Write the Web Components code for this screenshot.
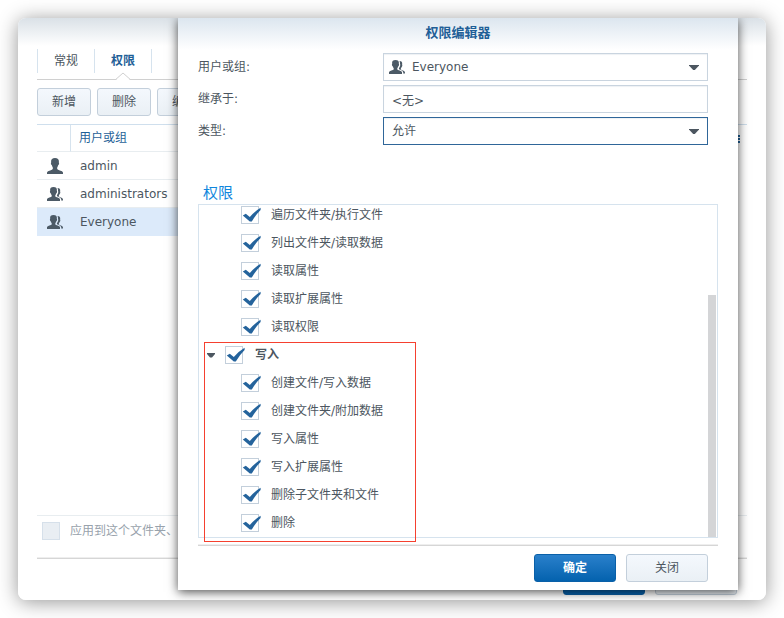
<!DOCTYPE html>
<html lang="zh-CN">
<head>
<meta charset="utf-8">
<title>权限编辑器</title>
<style>
  body {
    margin: 0;
    min-height: 100vh;
    display: flex;
    background: #fff;
    color: #4c5660;
    font: 12px/18px "DejaVu Sans", "Noto Sans CJK SC", sans-serif;
  }
</style>
</head>
<body>
<app-window>
  <tab-bar>
    <tab-item>常规</tab-item>
    <tab-item active>权限</tab-item>
  </tab-bar>
  <tool-bar>
    <ui-button>新增</ui-button>
    <ui-button>删除</ui-button>
    <ui-button>编辑</ui-button>
  </tool-bar>
  <user-table></user-table>
  <apply-bar>应用到这个文件夹、</apply-bar>
  <button-row slot="footer">
    <ui-button wide primary label="确定"></ui-button>
    <ui-button wide label="关闭"></ui-button>
  </button-row>

  <permission-dialog slot="dialog" heading="权限编辑器">
    <form-field slot="form" label="用户或组:" value="Everyone" type="select" icon></form-field>
    <form-field slot="form" label="继承于:" value="&lt;无&gt;" type="text"></form-field>
    <form-field slot="form" label="类型:" value="允许" type="select" focused></form-field>
    <permission-tree heading="权限">
      <check-row>遍历文件夹/执行文件</check-row>
      <check-row>列出文件夹/读取数据</check-row>
      <check-row>读取属性</check-row>
      <check-row>读取扩展属性</check-row>
      <check-row>读取权限</check-row>
      <check-row group>写入</check-row>
      <check-row>创建文件/写入数据</check-row>
      <check-row>创建文件夹/附加数据</check-row>
      <check-row>写入属性</check-row>
      <check-row>写入扩展属性</check-row>
      <check-row>删除子文件夹和文件</check-row>
      <check-row>删除</check-row>
    </permission-tree>
    <button-row slot="footer">
      <ui-button wide primary>确定</ui-button>
      <ui-button wide>关闭</ui-button>
    </button-row>
  </permission-dialog>
</app-window>

<script>
// Small base class: renders the markup of the subclass into its shadow root
class BaseElement extends HTMLElement {
  constructor() {
    super();
    this.attachShadow({ mode: "open" });
  }

  connectedCallback() {
    const template = document.createElement("template");
    template.innerHTML = this.render();
    this.shadowRoot.replaceChildren(template.content.cloneNode(true));
  }
}

class AppWindow extends BaseElement {
  render() {
    return `
<style>
  :host {
    position: relative;
    box-sizing: border-box;
    flex: 1;
    display: flex;
    flex-direction: column;
    margin: 18px;
    padding: 31px 19px 5px;
    border-radius: 8px;
    overflow: hidden;
    background: linear-gradient(#dae1e7, #fff 28px);
    box-shadow: 0 2px 20px rgba(0, 0, 0, 0.42);
  }
</style>
<slot></slot>
<slot name="footer"></slot>
<slot name="dialog"></slot>
`;
  }
}

class TabBar extends BaseElement {
  render() {
    return `
<style>
  :host {
    display: flex;
    padding-bottom: 6px;
    border-bottom: 1px solid #d0d0d0;
  }
</style>
<slot></slot>
`;
  }
}

class TabItem extends BaseElement {
  render() {
    return `
<style>
  :host {
    position: relative;
    display: block;
    border-left: 1px solid #d6e3ee;
  }
  :host(:last-child) {
    border-right: 1px solid #d6e3ee;
  }
  button {
    width: 56px;
    height: 24px;
    padding: 0;
    border: none;
    background: none;
    font: inherit;
    color: inherit;
    cursor: pointer;
  }
  svg {
    display: none;
  }
  :host([active]) button {
    color: #1f5f97;
    font-weight: bold;
  }
  :host([active]) svg {
    display: block;
    position: absolute;
    left: 50%;
    bottom: -7px;
    margin-left: -7px;
  }
</style>
<button><slot></slot></button>
<svg width="14" height="8" viewBox="0 0 14 8"><path d="M0.5 7L7 0.7L13.5 7V8H0.5Z" fill="#fff"/><path d="M0 7.2L7 1L14 7.2" fill="none" stroke="#d0d0d0"/></svg>
`;
  }
}

class ToolBar extends BaseElement {
  render() {
    return `
<style>
  :host {
    display: flex;
    gap: 6px;
    padding: 8px 0;
  }
</style>
<slot></slot>
`;
  }
}

class UiButton extends BaseElement {
  render() {
    const label = this.getAttribute("label");
    return `
<style>
  :host {
    display: block;
  }
  button {
    display: block;
    box-sizing: border-box;
    width: 54px;
    height: 28px;
    padding: 0;
    border: 1px solid #c3cfdb;
    border-radius: 3px;
    background: linear-gradient(#f4f8fd, #eaf0f5);
    font: inherit;
    color: inherit;
    cursor: pointer;
  }
  :host([wide]) button {
    width: 82px;
  }
  :host([primary]) button {
    border-color: #0a60a8;
    background: linear-gradient(#2a80cb, #0462ae);
    color: #fff;
    font-weight: bold;
  }
</style>
<button ${label ? `aria-label="${label}"` : ""}><slot></slot></button>
`;
  }
}

class ButtonRow extends BaseElement {
  render() {
    return `
<style>
  :host {
    display: flex;
    justify-content: flex-end;
    gap: 10px;
    padding: 10px 10px 0;
    background: linear-gradient(#eee 1px, #d6d6d6 1px, #d6d6d6 2px, transparent 2px);
  }
</style>
<slot></slot>
`;
  }
}

class UserIcon extends BaseElement {
  render() {
    const single = `<path d="M8 0C5.4 0 4 1.3 4.100 3.500L4.200 4.500Q3.500 4.800 4.100 6.200Q4.400 7.200 4.900 7.300Q5.200 8.600 5.800 9.400V11Q5.300 11.900 3.200 12.400Q0.300 13 0 14.400V16H16V14.400Q15.700 13 12.800 12.400Q10.700 11.900 10.200 11V9.400Q10.800 8.600 11.100 7.300Q11.600 7.200 11.900 6.200Q12.500 4.800 11.800 4.500L11.900 3.500C12 1.300 10.600 0 8 0Z"/>`;
    const group = `<path d="M6.500 1C4.100 1 3 2.100 3.100 4L3.200 5Q2.600 5.300 3.100 6.500Q3.400 7.400 3.900 7.500Q4.100 8.500 4.700 9.200V10.400Q4.300 11 2.400 11.500Q0.200 12.100 0 13.300V15H13V13.300Q12.800 12.100 10.600 11.500Q8.700 11 8.300 10.400V9.200Q8.900 8.500 9.100 7.500Q9.600 7.400 9.900 6.500Q10.400 5.300 9.800 5L9.900 4C10 2.100 8.900 1 6.500 1Z"/><path d="M10.500 2C12.500 2 13.400 3.200 13.200 5L13.100 5.700Q13.600 6 13.200 7Q13 7.800 12.600 8Q12.400 8.800 11.900 9.300V10.400Q12.500 11 14 11.600Q15.800 12.300 16 13.400V14.600H14.200V13Q13.600 11.500 11.500 10.800Q10.300 10.400 9.900 10V9.500Q10.200 9 10.400 8.300Q11 7.800 11.200 6.300Q11.300 5.200 11 4.600Q11.100 3 10.500 2Z"/>`;
    return `
<style>
  :host {
    display: block;
    width: 16px;
    height: 16px;
  }
  svg {
    display: block;
    fill: #4c5a66;
  }
</style>
<svg width="16" height="16" viewBox="0 0 16 16">${this.hasAttribute("single") ? single : group}</svg>
`;
  }
}

class UserTable extends BaseElement {
  render() {
    const users = [
      { name: "admin", icon: "single" },
      { name: "administrators", icon: "" },
      { name: "Everyone", icon: "", selected: true },
    ];
    const rows = users.map((user) => `
  <tr class="${user.selected ? "selected" : ""}">
    <td class="icon"><user-icon ${user.icon}></user-icon></td>
    <td>${user.name}</td>
    <td class="menu"></td>
  </tr>`).join("");
    return `
<style>
  :host {
    display: block;
    flex: 1;
    border-bottom: 1px solid #e8edf0;
  }
  table {
    width: 100%;
    table-layout: fixed;
    border-collapse: separate;
    border-spacing: 0;
    border-top: 1px solid #cfdfed;
  }
  th, td {
    box-sizing: border-box;
    height: 28px;
    padding: 0 9px;
    border-bottom: 1px solid #e8edf0;
    text-align: left;
  }
  th {
    height: 27px;
    padding-left: 8px;
    color: #1f5f97;
    font-weight: normal;
  }
  .icon {
    width: 34px;
    padding: 0 0 0 10px;
  }
  th.icon {
    border-right: 1px solid #d6e3ee;
  }
  .menu {
    width: 17px;
    padding: 0;
    border-bottom: none;
  }
  .menu button {
    display: block;
    width: 10px;
    height: 8px;
    padding: 0;
    border: none;
    background: none;
  }
  .menu svg {
    display: block;
  }
  .selected td:not(.menu) {
    background: #dceafa;
    border-color: #dceafa;
  }
</style>
<table>
  <thead>
    <tr>
      <th class="icon"></th>
      <th>用户或组</th>
      <th class="menu"><button aria-label="列"><svg width="10" height="8" viewBox="0 0 10 8" fill="#1f5f97"><path d="M0 0H5V2H0ZM0 3H5V5H0ZM0 6H5V8H0ZM7 0H10V2H7ZM7 3H10V5H7ZM7 6H10V8H7Z"/></svg></button></th>
    </tr>
  </thead>
  <tbody>${rows}</tbody>
</table>
`;
  }
}

class ApplyBar extends BaseElement {
  render() {
    return `
<style>
  :host {
    display: block;
    height: 35px;
    padding: 6px 5px 0;
    color: #98a2ac;
  }
  label {
    display: flex;
    align-items: center;
    gap: 10px;
  }
  input {
    appearance: none;
    box-sizing: border-box;
    width: 18px;
    height: 18px;
    margin: 0;
    border: 1px solid #d6e0ea;
    background: #e9eef3;
  }
</style>
<label><input type="checkbox" disabled><span><slot></slot></span></label>
`;
  }
}

class PermissionDialog extends BaseElement {
  render() {
    return `
<style>
  /* Floats over the main window */
  :host {
    position: absolute;
    top: 0;
    right: 28px;
    bottom: 10px;
    left: 160px;
    box-sizing: border-box;
    display: flex;
    flex-direction: column;
    padding: 0 20px 8px;
    background: linear-gradient(#dce6ef, #fff 32px);
    box-shadow: 0 2px 10px rgba(0, 0, 0, 0.7);
  }
  h1 {
    margin: 0;
    color: #1f5f97;
    font-size: 13px;
    line-height: 30px;
    text-align: center;
  }
  .form {
    display: flex;
    flex-direction: column;
    gap: 4px;
    padding: 5px 10px 37px 0;
  }
</style>
<h1>${this.getAttribute("heading")}</h1>
<div class="form"><slot name="form"></slot></div>
<slot></slot>
<slot name="footer"></slot>
`;
  }
}

class FormField extends BaseElement {
  render() {
    const value = this.getAttribute("value").replace("<", "&lt;");
    const isSelect = this.getAttribute("type") === "select";
    const control = isSelect
      ? `<select id="control"><option>${value}</option></select>
         <svg class="arrow" width="10" height="5" viewBox="0 0 10 5"><path d="M0 0H10V0.600L5.800 5H4.200L0 0.600Z" fill="#4c5660"/></svg>`
      : `<input id="control" type="text" value="${value}" readonly>`;
    return `
<style>
  :host {
    display: flex;
  }
  label {
    width: 185px;
    line-height: 28px;
  }
  .box {
    flex: 1;
    box-sizing: border-box;
    height: 28px;
    display: grid;
    align-items: center;
    border: 1px solid #c9d4df;
    background: #fff;
    box-shadow: inset 0 1px 1px #eef1f4;
  }
  .box > * {
    grid-area: 1 / 1;
  }
  :host([focused]) .box {
    border-color: #2f6699;
  }
  select, input {
    appearance: none;
    box-sizing: border-box;
    width: 100%;
    height: 26px;
    padding: 0 8px;
    border: none;
    outline: none;
    background: none;
    font: inherit;
    color: inherit;
  }
  :host([icon]) select {
    padding-left: 28px;
  }
  user-icon {
    margin-left: 5px;
    pointer-events: none;
  }
  .arrow {
    justify-self: end;
    margin-right: 8px;
    pointer-events: none;
  }
</style>
<label for="control">${this.getAttribute("label")}</label>
<div class="box">
  ${control}
  ${this.hasAttribute("icon") ? "<user-icon></user-icon>" : ""}
</div>
`;
  }
}

class PermissionTree extends BaseElement {
  render() {
    return `
<style>
  :host {
    flex: 1;
    display: flex;
    flex-direction: column;
    min-height: 0;
    padding-bottom: 6px;
  }
  h2 {
    margin: 0;
    padding-left: 5px;
    color: #0f86dd;
    font-size: 15px;
    font-weight: normal;
    line-height: 22px;
  }
  .frame {
    position: relative;
    flex: 1;
    min-height: 0;
    display: flex;
    border: 1px solid #d6e3ee;
  }
  /* Scrolled to the end, so the rows sit on the bottom edge */
  .rows {
    flex: 1;
    display: flex;
    flex-direction: column;
    justify-content: flex-end;
    overflow: hidden;
  }
  .thumb {
    align-self: flex-end;
    width: 8px;
    height: 73%;
    margin-right: 1px;
    background: #d4d5d7;
  }
  /* Red frame round the last group */
  .mark {
    position: absolute;
    left: 5px;
    bottom: -5px;
    box-sizing: border-box;
    width: 212px;
    height: 200px;
    border: 1px solid #f5402f;
    pointer-events: none;
  }
</style>
<h2>${this.getAttribute("heading")}</h2>
<div class="frame">
  <div class="rows"><slot></slot></div>
  <div class="thumb"></div>
  <div class="mark"></div>
</div>
`;
  }
}

class CheckRow extends BaseElement {
  render() {
    return `
<style>
  :host {
    flex: none;
    display: flex;
    align-items: center;
    height: 28px;
    padding-left: 42px;
  }
  :host([group]) {
    padding-left: 8px;
    font-weight: bold;
  }
  .toggle {
    display: none;
    width: 18px;
    height: 18px;
    padding: 0;
    border: none;
    background: none;
  }
  :host([group]) .toggle {
    display: block;
  }
  .toggle svg {
    display: block;
  }
  label {
    display: flex;
    align-items: center;
  }
  .check {
    display: grid;
    width: 20px;
    margin-right: 10px;
  }
  .check > * {
    grid-area: 1 / 1;
  }
  input {
    appearance: none;
    box-sizing: border-box;
    width: 18px;
    height: 18px;
    margin: 0;
    border: 1px solid #c3cfdb;
    background: #fff;
  }
  .check svg {
    display: none;
    pointer-events: none;
  }
  input:checked + svg {
    display: block;
  }
</style>
<button class="toggle" aria-label="折叠"><svg width="8" height="5" viewBox="0 0 8 5"><path d="M0 0H8V1L5 4.500H3L0 1Z" fill="#4c5660"/></svg></button>
<label>
  <span class="check">
    <input type="checkbox" checked>
    <svg width="20" height="18" viewBox="0 0 20 18"><path d="M1.800 9.600L4.800 7.800L8.800 11Q13.500 5.400 19.600 1.800V4Q14.800 8.800 10.800 15.400H8.800Z" fill="#24639c"/></svg>
  </span>
  <span><slot></slot></span>
</label>
`;
  }
}

window.customElements.define("app-window", AppWindow);
window.customElements.define("tab-bar", TabBar);
window.customElements.define("tab-item", TabItem);
window.customElements.define("tool-bar", ToolBar);
window.customElements.define("ui-button", UiButton);
window.customElements.define("button-row", ButtonRow);
window.customElements.define("user-icon", UserIcon);
window.customElements.define("user-table", UserTable);
window.customElements.define("apply-bar", ApplyBar);
window.customElements.define("permission-dialog", PermissionDialog);
window.customElements.define("form-field", FormField);
window.customElements.define("permission-tree", PermissionTree);
window.customElements.define("check-row", CheckRow);
</script>
</body>
</html>
